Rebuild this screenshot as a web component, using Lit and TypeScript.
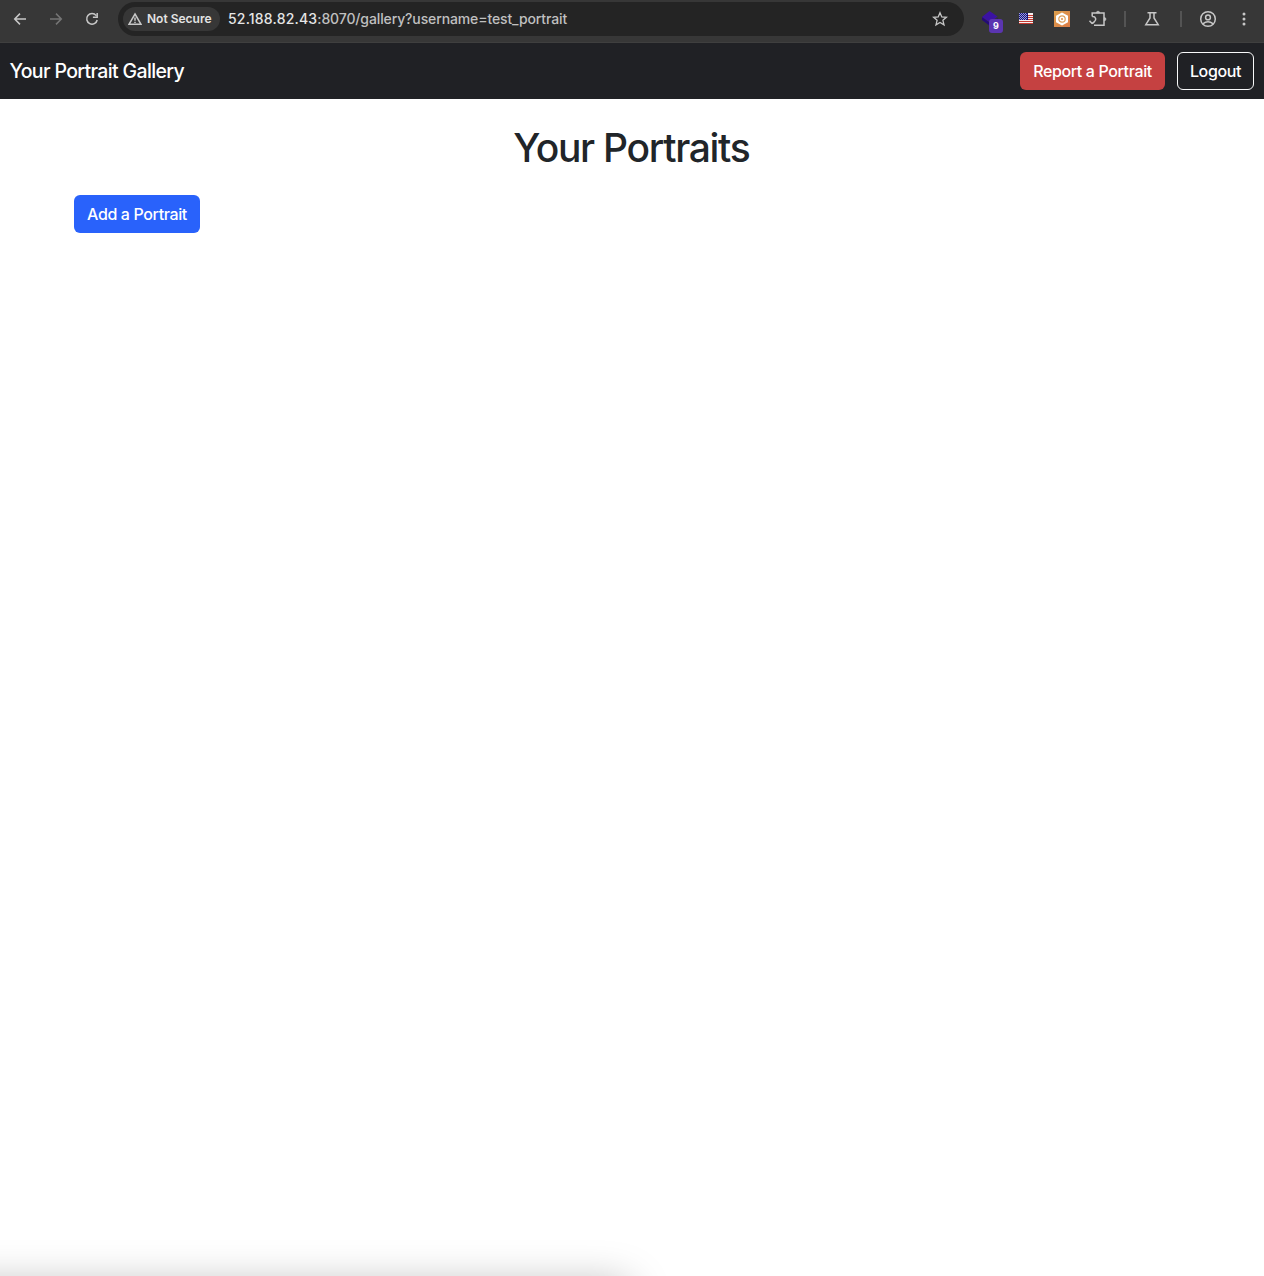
import { LitElement, html, css, svg } from "lit";
import { customElement } from "lit/decorators.js";

const stars = [0, 1, 2, 3, 4, 5, 6].flatMap((r) => [0, 1, 2, 3].map((c) => [(r % 2) + c * 2, r]));

@customElement("browser-bar")
class BrowserBar extends LitElement {
  static styles = css`
    :host { display: block; }
    .bar { box-sizing: border-box; height: 43px; display: flex; align-items: flex-start; background: #373737; border-bottom: 1px solid #3f3f3f; padding: 2px 2px 0; font-family: Inter, sans-serif; }
    .slot { box-sizing: border-box; width: 36px; height: 34px; flex: none; display: flex; align-items: center; justify-content: center; position: relative; color: #c7c7c7; }
    .flag { padding-bottom: 1px; }
    .dim { color: #757575; }
    svg { display: block; flex: none; fill: none; stroke: currentColor; stroke-width: 1.5; }
    .omni { box-sizing: border-box; flex: 1; height: 34px; margin: 0 8px; padding: 0 6px 0 5px; border-radius: 17px; background: #242424; display: flex; align-items: center; }
    .chip { box-sizing: border-box; width: 97px; height: 24px; border-radius: 12px; background: #373737; color: #e3e3e3; display: flex; align-items: center; padding: 0 0 1px 5px; gap: 5px; font-size: 12px; font-weight: 600; white-space: nowrap; letter-spacing: 0; }
    .chip svg { color: #c7c7c7; position: relative; top: 0.5px; }
    .url { flex: 1; margin-left: 8px; font-size: 14px; line-height: 20px; font-weight: 450; color: #c0c0c0; white-space: nowrap; letter-spacing: -0.12px; }
    .host { color: #e6e6e6; letter-spacing: 0.19px; }
    .sep { width: 2px; height: 16px; margin: 9px 8px 0; background: #545454; flex: none; }
    .wide { margin-left: 10px; }
    .badge { position: absolute; left: 17px; top: 17px; width: 14px; height: 14px; border-radius: 3px; background: #5b35b0; color: #fff; font-size: 9px; line-height: 14px; font-weight: 700; text-align: center; }
  `;
  render() {
    return html`<div class="bar">
      <div class="slot"><svg width="16" height="16" viewBox="0 0 16 16"><path d="M14 8H3M8 2.6 2.7 8 8 13.4" /></svg></div>
      <div class="slot dim"><svg width="16" height="16" viewBox="0 0 16 16"><path d="M2 8H13M8 2.6 13.3 8 8 13.4" /></svg></div>
      <div class="slot"><svg width="16" height="16" viewBox="0 0 16 16"><path d="M12.2 4.6A5.3 5.3 0 1 0 13.2 9M13.2 2V6.3H8.9" /></svg></div>
      <div class="omni">
        <div class="chip">
          <svg width="14" height="14" viewBox="0 0 14 14" stroke-width="1.3"><path d="M7 2 13 12.3H1ZM7 5.5V8.8M7 9.7V11" /></svg>
          <span>Not Secure</span>
        </div>
        <div class="url"><span class="host">52.188.82.43</span>:8070/gallery?username=test_portrait</div>
        <div class="slot"><svg width="16" height="16" viewBox="0 0 16 16"><path stroke-width="1.3" d="M8 1.7 9.8 5.9 14.4 6.3 10.9 9.3 12 13.8 8 11.4 4 13.8 5.1 9.3 1.6 6.3 6.2 5.9Z" /></svg></div>
      </div>
      <div class="slot">
        <svg width="20" height="20" viewBox="0 0 20 20"><path fill="#240a78" stroke="none" d="M2 8 10 14V17L2 11ZM10 14 18 9V12L10 17Z" /><path fill="#3b12a3" stroke="none" d="M9.5 2 17.5 7.5 10 13.5 2 8Z" /></svg>
        <span class="badge">9</span>
      </div>
      <div class="slot flag">
        <svg width="14" height="11" viewBox="0 0 14 11" shape-rendering="crispEdges"><g stroke="none">
          <rect width="14" height="11" fill="#f6f1f1" />
          ${[2, 4, 6, 8, 10].map((y) => svg`<rect y=${y} width="14" height="1" fill="#c43a30" />`)}
          <rect width="9" height="7" fill="#17177f" />
          ${stars.map(([x, y]) => svg`<rect x=${x} y=${y} width="1" height="1" fill="#9c9cdc" />`)}
        </g></svg>
      </div>
      <div class="slot">
        <svg width="16" height="16" viewBox="0 0 16 16">
          <defs><linearGradient id="g" x2="1" y2="1"><stop stop-color="#dda04d" /><stop offset="1" stop-color="#dc7c47" /></linearGradient></defs>
          <rect width="16" height="16" fill="url(#g)" stroke="none" />
          <path d="M8 1.5 14 4.8V11.2L8 14.5 2 11.2V4.8Z" fill="#fff" stroke="none" />
          <circle cx="8" cy="8" r="3.2" stroke="#dea05c" stroke-width="1.2" /><circle cx="8" cy="8" r="1.1" fill="#df9651" stroke="none" />
        </svg>
      </div>
      <div class="slot"><svg width="20" height="20" viewBox="0 0 20 20"><path d="M4.2 7.6V4.1H16V16.2H6M4.2 7.6C8.2 7.4 8.6 11 6.4 12.6L4.3 14.6M1.5 11.8 4.3 14.8" /><path d="M8.4 3.8A1.6 1.6 0 0 1 11.6 3.8ZM16.3 8.5A1.6 1.6 0 0 1 16.3 11.7Z" fill="currentColor" stroke-width=".7" /></svg></div>
      <div class="sep"></div>
      <div class="slot"><svg width="16" height="16" viewBox="0 0 16 16"><path d="M3.5 1.8H12.5M6 2V7L1.8 13.7H14.2L10 7V2" /></svg></div>
      <div class="sep wide"></div>
      <div class="slot"><svg width="18" height="18" viewBox="0 0 18 18"><circle cx="9" cy="9" r="7.3" /><circle cx="9" cy="7.4" r="2.4" /><path d="M3.8 13.8Q9 9.9 14.2 13.8" /></svg></div>
      <div class="slot"><svg width="16" height="16" viewBox="0 0 16 16"><g fill="currentColor" stroke="none"><circle cx="8" cy="3" r="1.5" /><circle cx="8" cy="8" r="1.5" /><circle cx="8" cy="13" r="1.5" /></g></svg></div>
    </div>`;
  }
}

@customElement("app-root")
class AppRoot extends LitElement {
  static styles = css`
    :host { display: block; }
    .page { height: 1276px; position: relative; overflow: hidden; background: #fff; color: #212529; font-family: Inter, sans-serif; }
    .nav { box-sizing: border-box; height: 56px; padding: 0 10px 0 9.5px; display: flex; align-items: center; gap: 12px; background: #202125; color: #fff; }
    .brand { flex: 1; font-size: 19.5px; line-height: 30px; font-weight: 450; letter-spacing: -0.64px; white-space: nowrap; }
    .btn { box-sizing: border-box; height: 38px; border: 1px solid transparent; border-radius: 6px; padding: 0; font: 450 16px/24px Inter, sans-serif; letter-spacing: -0.37px; color: #fff; background: none; white-space: nowrap; display: flex; align-items: center; justify-content: center; }
    .report { width: 145px; background: #c54141; }
    .logout { width: 77px; border-color: #f8f9fa; }
    .add { width: 126px; background: #2962fb; }
    .content { padding: 25px 74px 0; }
    .title { margin: 0 0 23px; text-align: center; font-size: 39px; line-height: 48px; font-weight: 550; letter-spacing: -1.3px; text-indent: -1.3px; }
    .shade { position: absolute; left: -100px; top: 1283px; width: 730px; height: 100px; border-radius: 10px; box-shadow: 0 0 42px rgba(0, 0, 0, 0.27); }
  `;
  render() {
    return html`<div class="page">
      <browser-bar></browser-bar>
      <nav class="nav">
        <span class="brand">Your Portrait Gallery</span>
        <button class="btn report">Report a Portrait</button>
        <button class="btn logout">Logout</button>
      </nav>
      <main class="content">
        <h1 class="title">Your Portraits</h1>
        <button class="btn add">Add a Portrait</button>
      </main>
      <div class="shade"></div>
    </div>`;
  }
}
